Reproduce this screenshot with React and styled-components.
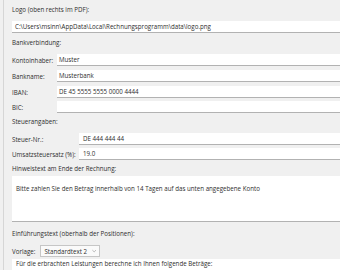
import React from "react";
import styled, { createGlobalStyle } from "styled-components";

const GlobalStyle = createGlobalStyle`
  html, body {
    margin: 0;
    padding: 0;
    background: #f0f0f0;
  }
  body {
    font-family: "Open Sans", "Noto Sans", sans-serif;
    font-size: 6.2px;
    color: #2e2e2e;
  }
`;

const Panel = styled.div`
  height: 270px;
  overflow: hidden;
  margin-left: 3px;
  border-left: 1px solid #d6d6d6;
  padding: 3px 0 0 8px;
  box-sizing: border-box;
  display: flex;
  flex-direction: column;
`;

const SectionLabel = styled.div`
  height: 14px;
  line-height: 14px;
  margin-top: ${(p) => p.$top || 0}px;
  white-space: nowrap;
`;

const Field = styled.div`
  height: 11px;
  line-height: 11px;
  background: #fff;
  border-bottom: 1px solid #b2b2b2;
  padding-left: ${(p) => p.$pad || 2}px;
  white-space: nowrap;
  overflow: hidden;
  flex: 1;
`;

const Row = styled.div`
  display: grid;
  grid-template-columns: ${(p) => p.$label}px 1fr;
  align-items: center;
  margin-top: ${(p) => p.$top || 0}px;
`;

const RowLabel = styled.span`
  white-space: nowrap;
`;

const TextArea = styled.div`
  background: #fff;
  border-bottom: 1px solid #b2b2b2;
  height: ${(p) => p.$h}px;
  padding: ${(p) => p.$padTop}px 0 0 4px;
  line-height: ${(p) => p.$lh || 10}px;
  box-sizing: border-box;
  white-space: nowrap;
  margin-top: ${(p) => p.$top || 0}px;
  flex-shrink: 0;
`;

const SelectRow = styled.div`
  display: flex;
  align-items: center;
  gap: 5px;
  margin-top: 4px;
  height: 12px;
`;

const Select = styled.div`
  display: flex;
  align-items: center;
  gap: 5px;
  width: 60px;
  height: 12px;
  box-sizing: border-box;
  border: 1px solid #c6c6c6;
  background: #fafafa;
  padding: 0 3px;
  white-space: nowrap;
`;

const Chevron = () => (
  <svg width="6" height="4" viewBox="0 0 6 4">
    <path d="M0.5 0.8 L3 3.2 L5.5 0.8" fill="none" stroke="#8a8a8a" strokeWidth="0.8" />
  </svg>
);

const App = () => {
  return (
    <>
      <GlobalStyle />
      <Panel>
        <SectionLabel>Logo (oben rechts im PDF):</SectionLabel>
        <Row $label={0} $top={4}>
          <span />
          <Field $pad={3}>
            {"C:\\Users\\msinn\\AppData\\Local\\Rechnungsprogramm\\data\\logo.png"}
          </Field>
        </Row>

        <SectionLabel $top={3}>Bankverbindung:</SectionLabel>
        <Row $label={45} $top={4}>
          <RowLabel>Kontoinhaber:</RowLabel>
          <Field>Muster</Field>
        </Row>
        <Row $label={45} $top={4}>
          <RowLabel>Bankname:</RowLabel>
          <Field>Musterbank</Field>
        </Row>
        <Row $label={45} $top={4}>
          <RowLabel>IBAN:</RowLabel>
          <Field>DE 45 5555 5555 0000 4444</Field>
        </Row>
        <Row $label={45} $top={3}>
          <RowLabel>BIC:</RowLabel>
          <Field />
        </Row>

        <SectionLabel $top={2}>Steuerangaben:</SectionLabel>
        <Row $label={67} $top={4}>
          <RowLabel>Steuer-Nr.:</RowLabel>
          <Field $pad={4}>DE 444 444 44</Field>
        </Row>
        <Row $label={67} $top={3}>
          <RowLabel>Umsatzsteuersatz (%):</RowLabel>
          <Field $pad={4}>19.0</Field>
        </Row>

        <SectionLabel $top={2}>Hinweistext am Ende der Rechnung:</SectionLabel>
        <TextArea $h={46} $padTop={8}>
          Bitte zahlen Sie den Betrag innerhalb von 14 Tagen auf das unten angegebene Konto
        </TextArea>

        <SectionLabel $top={5}>Einführungstext (oberhalb der Positionen):</SectionLabel>
        <SelectRow>
          <RowLabel>Vorlage:</RowLabel>
          <Select>
            <span>Standardtext 2</span>
            <Chevron />
          </Select>
        </SelectRow>
        <TextArea $h={30} $padTop={1} $lh={8} $top={2}>
          Für die erbrachten Leistungen berechne ich Ihnen folgende Beträge:
        </TextArea>
      </Panel>
    </>
  );
};

export default App;
